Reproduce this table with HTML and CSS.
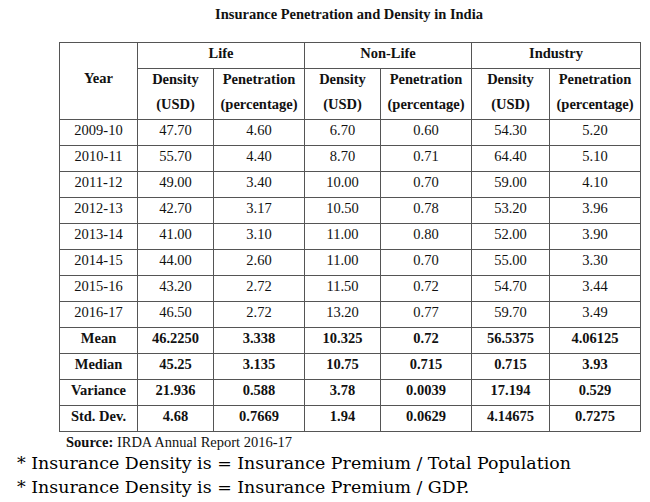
FILE: index.html
```html
<!DOCTYPE html>
<html>
<head>
<meta charset="utf-8">
<link rel="stylesheet" href="styles.css">
</head>
<body>
<div class="page">
  <h1 class="title">Insurance Penetration and Density in India</h1>
  <table class="data">
    <colgroup>
      <col class="c-year"><col class="c-d"><col class="c-p"><col class="c-d"><col class="c-p"><col class="c-d2"><col class="c-p">
    </colgroup>
    <thead>
      <tr class="h1">
        <th rowspan="2" class="year">Year</th>
        <th colspan="2">Life</th>
        <th colspan="2">Non-Life</th>
        <th colspan="2">Industry</th>
      </tr>
      <tr class="h2">
        <th><span class="l1">Density</span><span class="l2">(USD)</span></th>
        <th><span class="l1">Penetration</span><span class="l2">(percentage)</span></th>
        <th><span class="l1">Density</span><span class="l2">(USD)</span></th>
        <th><span class="l1">Penetration</span><span class="l2">(percentage)</span></th>
        <th><span class="l1">Density</span><span class="l2">(USD)</span></th>
        <th><span class="l1">Penetration</span><span class="l2">(percentage)</span></th>
      </tr>
    </thead>
    <tbody>
      <tr><td>2009-10</td><td>47.70</td><td>4.60</td><td>6.70</td><td>0.60</td><td>54.30</td><td>5.20</td></tr>
      <tr><td>2010-11</td><td>55.70</td><td>4.40</td><td>8.70</td><td>0.71</td><td>64.40</td><td>5.10</td></tr>
      <tr><td>2011-12</td><td>49.00</td><td>3.40</td><td>10.00</td><td>0.70</td><td>59.00</td><td>4.10</td></tr>
      <tr><td>2012-13</td><td>42.70</td><td>3.17</td><td>10.50</td><td>0.78</td><td>53.20</td><td>3.96</td></tr>
      <tr><td>2013-14</td><td>41.00</td><td>3.10</td><td>11.00</td><td>0.80</td><td>52.00</td><td>3.90</td></tr>
      <tr><td>2014-15</td><td>44.00</td><td>2.60</td><td>11.00</td><td>0.70</td><td>55.00</td><td>3.30</td></tr>
      <tr><td>2015-16</td><td>43.20</td><td>2.72</td><td>11.50</td><td>0.72</td><td>54.70</td><td>3.44</td></tr>
      <tr><td>2016-17</td><td>46.50</td><td>2.72</td><td>13.20</td><td>0.77</td><td>59.70</td><td>3.49</td></tr>
      <tr class="stat"><td>Mean</td><td>46.2250</td><td>3.338</td><td>10.325</td><td>0.72</td><td>56.5375</td><td>4.06125</td></tr>
      <tr class="stat"><td>Median</td><td>45.25</td><td>3.135</td><td>10.75</td><td>0.715</td><td>0.715</td><td>3.93</td></tr>
      <tr class="stat"><td>Variance</td><td>21.936</td><td>0.588</td><td>3.78</td><td>0.0039</td><td>17.194</td><td>0.529</td></tr>
      <tr class="stat"><td>Std. Dev.</td><td>4.68</td><td>0.7669</td><td>1.94</td><td>0.0629</td><td>4.14675</td><td>0.7275</td></tr>
    </tbody>
  </table>
  <p class="source"><b>Source:</b> IRDA Annual Report 2016-17</p>
  <p class="note">* Insurance Density is = Insurance Premium / Total Population</p>
  <p class="note">* Insurance Density is = Insurance Premium / GDP.</p>
</div>
</body>
</html>
```

FILE: styles.css
```css
html, body {
  margin: 0;
  padding: 0;
  background: #ffffff;
}

.page {
  display: flex;
  flex-direction: column;
  width: 650px;
  color: #111;
  font-family: "Liberation Serif", "Times New Roman", serif;
}

.title {
  margin: 0;
  padding-top: 6px;
  height: 42px;
  box-sizing: border-box;
  font-size: 14.5px;
  font-weight: bold;
  line-height: 16px;
  text-align: center;
  padding-left: 48px;
}

.data {
  margin-left: 59px;
  width: 582px;
  border-collapse: collapse;
  table-layout: fixed;
  font-size: 14.5px;
}

.c-year { width: 78px; }
.c-d { width: 76px; }
.c-p { width: 91px; }
.c-d2 { width: 78px; }

.data th,
.data td {
  border: 1px solid #555;
  padding: 0;
  text-align: center;
  vertical-align: middle;
}

.data th {
  font-weight: bold;
}

.data .h1 th {
  height: 20px;
  padding-bottom: 5px;
  line-height: 16px;
}

.data .h2 th {
  height: 50px;
  vertical-align: top;
}

.data .h2 .l1 {
  display: block;
  line-height: 20px;
}

.data .h2 .l2 {
  display: block;
  line-height: 30px;
}

.data .h1 th.year {
  height: auto;
  padding-bottom: 7px;
}

.data td {
  height: 20px;
  padding-bottom: 5px;
  line-height: 16px;
}

.data .stat td {
  font-weight: bold;
}

.source {
  margin: 0;
  padding-left: 66px;
  padding-top: 2px;
  height: 18px;
  font-size: 14.5px;
  line-height: 17px;
}

.note {
  margin: 0;
  padding-left: 17px;
  font-family: "DejaVu Serif", serif;
  font-size: 17.4px;
  line-height: 23.5px;
  color: #000;
}
```
